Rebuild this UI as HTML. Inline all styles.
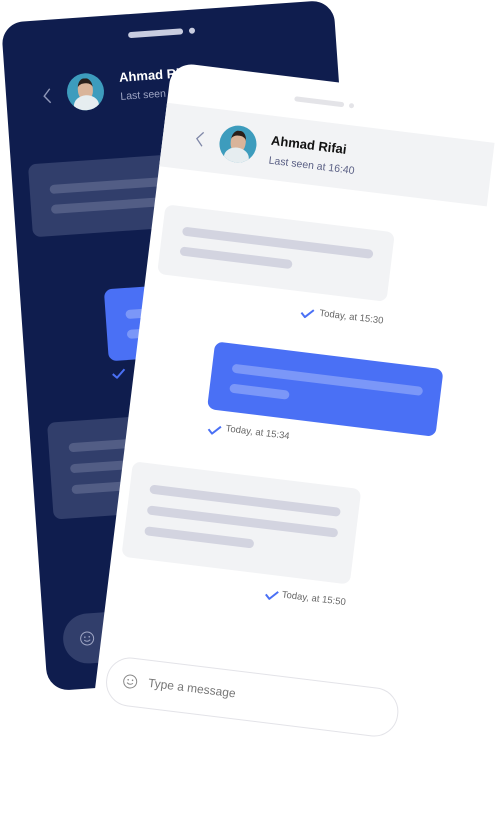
<!DOCTYPE html>
<html><head><meta charset="utf-8"><style>
html,body{margin:0;padding:0;background:#fff;width:498px;height:768px;overflow:hidden;font-family:"Liberation Sans",sans-serif}
.ph{position:absolute;transform-origin:0 0}
.ab{position:absolute}
.line{position:absolute;height:9px;border-radius:5px}
.av{position:absolute;width:37px;height:37px;border-radius:50%;background:#3d9cbd;overflow:hidden}
.av .b{position:absolute;left:6px;top:22px;width:25px;height:20px;border-radius:50% 50% 0 0;background:#e6edf0}
.av .h{position:absolute;left:11px;top:5px;width:15px;height:17px;border-radius:45%;background:#d9b49a;border-top:5px solid #2a1f1a}
</style></head><body>

<!-- back phone -->
<div class="ph" style="left:1px;top:23px;width:333px;height:670px;background:#0f1d4e;border-radius:22px;transform:rotate(-4deg)">
  <div class="ab" style="left:126px;top:18px;width:55px;height:6px;border-radius:3px;background:#c9cde0"></div>
  <div class="ab" style="left:187px;top:18px;width:6px;height:6px;border-radius:3px;background:#c9cde0"></div>
  <svg class="ab" style="left:36px;top:68px" width="10" height="16"><path d="M8 1 L2 8 L8 15" stroke="#8f97b8" stroke-width="1.4" fill="none"/></svg>
  <div class="av" style="left:61px;top:56px"><div class="h"></div><div class="b"></div></div>
  <div class="ab" style="left:114px;top:55px;color:#fff;font-weight:bold;font-size:13px">Ahmad Rifai</div>
  <div class="ab" style="left:114px;top:76px;color:#9ea5c4;font-size:10.5px">Last seen at 16:40</div>
  <div class="ab" style="left:17px;top:143px;width:230px;height:73px;border-radius:8px;background:#313e6b">
    <div class="line" style="left:20px;top:22px;width:192px;background:#525d85"></div>
    <div class="line" style="left:20px;top:42px;width:192px;background:#525d85"></div>
  </div>
  <div class="ab" style="left:84px;top:273px;width:230px;height:72px;border-radius:8px;background:#4a70f5">
    <div class="line" style="left:20px;top:22px;width:192px;background:#7b97f8"></div>
    <div class="line" style="left:20px;top:42px;width:60px;background:#7b97f8"></div>
  </div>
  <svg class="ab" style="left:86px;top:353px" width="14" height="10"><path d="M1 5 L5 9 L13 1" stroke="#4a70f5" stroke-width="2" fill="none"/></svg>
  <div class="ab" style="left:18px;top:402px;width:230px;height:97px;border-radius:8px;background:#313e6b">
    <div class="line" style="left:20px;top:22px;width:192px;background:#525d85"></div>
    <div class="line" style="left:20px;top:43px;width:192px;background:#525d85"></div>
    <div class="line" style="left:20px;top:64px;width:110px;background:#525d85"></div>
  </div>
  <div class="ab" style="left:19px;top:595px;width:294px;height:50px;border-radius:25px;background:#313e6b"></div>
  <svg class="ab" style="left:35px;top:612px" width="16" height="16"><circle cx="8" cy="8" r="6.5" stroke="#9ea5c4" fill="none"/><circle cx="5.8" cy="6.5" r=".8" fill="#9ea5c4"/><circle cx="10.2" cy="6.5" r=".8" fill="#9ea5c4"/><path d="M5 9.5 Q8 12 11 9.5" stroke="#9ea5c4" fill="none"/></svg>
</div>

<!-- front phone -->
<div class="ph" style="left:172px;top:62px;width:330px;height:720px;background:#fff;border-radius:22px;transform:rotate(7deg)">
  <div class="ab" style="left:126px;top:19px;width:50px;height:5px;border-radius:3px;background:#e4e4e8"></div>
  <div class="ab" style="left:181px;top:19px;width:5px;height:5px;border-radius:3px;background:#e4e4e8"></div>
  <div class="ab" style="left:0;top:41px;width:330px;height:64px;background:#f2f3f5"></div>
  <svg class="ab" style="left:32px;top:65px" width="10" height="16"><path d="M8 1 L2 8 L8 15" stroke="#8088a8" stroke-width="1.3" fill="none"/></svg>
  <div class="av" style="left:57px;top:55px"><div class="h"></div><div class="b"></div></div>
  <div class="ab" style="left:108px;top:58px;color:#111;font-weight:bold;font-size:13px">Ahmad Rifai</div>
  <div class="ab" style="left:108px;top:80px;color:#5b6085;font-size:10.5px">Last seen at 16:40</div>
  <div class="ab" style="left:11px;top:142px;width:231px;height:70px;border-radius:8px;background:#f2f3f5">
    <div class="line" style="left:20px;top:20px;width:192px;background:#d3d4e0"></div>
    <div class="line" style="left:20px;top:40px;width:113px;background:#d3d4e0"></div>
  </div>
  <svg class="ab" style="left:158px;top:228px" width="14" height="10"><path d="M1 5 L5 9 L13 1" stroke="#4a70f5" stroke-width="2" fill="none"/></svg>
  <div class="ab" style="left:177px;top:226px;color:#666;font-size:9.5px">Today, at 15:30</div>
  <div class="ab" style="left:77px;top:272px;width:230px;height:68px;border-radius:8px;background:#4a70f5">
    <div class="line" style="left:20px;top:20px;width:192px;background:#7b97f8"></div>
    <div class="line" style="left:20px;top:40px;width:60px;background:#7b97f8"></div>
  </div>
  <svg class="ab" style="left:80px;top:355px" width="14" height="10"><path d="M1 5 L5 9 L13 1" stroke="#4a70f5" stroke-width="2" fill="none"/></svg>
  <div class="ab" style="left:98px;top:352px;color:#666;font-size:9.5px">Today, at 15:34</div>
  <div class="ab" style="left:10px;top:401px;width:230px;height:96px;border-radius:8px;background:#f2f3f5">
    <div class="line" style="left:20px;top:21px;width:192px;background:#d3d4e0"></div>
    <div class="line" style="left:20px;top:42px;width:192px;background:#d3d4e0"></div>
    <div class="line" style="left:20px;top:63px;width:110px;background:#d3d4e0"></div>
  </div>
  <svg class="ab" style="left:157px;top:512px" width="14" height="10"><path d="M1 5 L5 9 L13 1" stroke="#4a70f5" stroke-width="2" fill="none"/></svg>
  <div class="ab" style="left:174px;top:510px;color:#666;font-size:9.5px">Today, at 15:50</div>
  <div class="ab" style="left:10px;top:596px;width:292px;height:47px;border-radius:24px;border:1px solid #e3e3e8;background:#fff"></div>
  <svg class="ab" style="left:26px;top:612px" width="16" height="16"><circle cx="8" cy="8" r="6.5" stroke="#888" fill="none"/><circle cx="5.8" cy="6.5" r=".8" fill="#888"/><circle cx="10.2" cy="6.5" r=".8" fill="#888"/><path d="M5 9.5 Q8 12 11 9.5" stroke="#888" fill="none"/></svg>
  <div class="ab" style="left:52px;top:612px;color:#777;font-size:12px">Type a message</div>
</div>
</body></html>
